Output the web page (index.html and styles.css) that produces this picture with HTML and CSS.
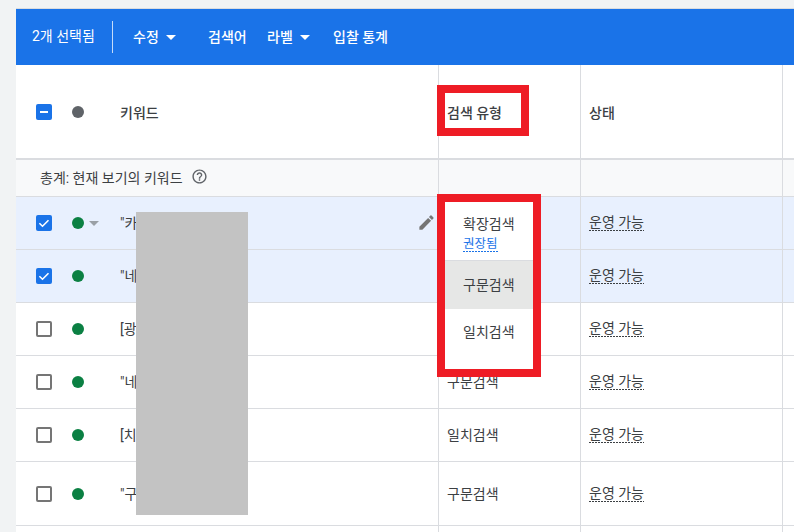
FILE: index.html
```html
<!DOCTYPE html>
<html lang="ko">
<head>
<meta charset="utf-8">
<title>키워드</title>
<link rel="stylesheet" href="styles.css">
</head>
<body>
<div class="page">
  <div class="toolbar">
    <span class="count">2개 선택됨</span>
    <span class="divider"></span>
    <span class="action action-edit">수정<i class="tool-caret"></i></span>
    <span class="action action-search">검색어</span>
    <span class="action action-label">라벨<i class="tool-caret"></i></span>
    <span class="action">입찰 통계</span>
  </div>

  <div class="row head">
    <div class="cell kw"><span class="box on"><svg viewBox="0 0 16 16"><path d="M4 8h8" stroke="#fff" stroke-width="2"/></svg></span><span class="slot"><i class="dot grey"></i></span><span class="name">키워드</span></div>
    <div class="cell">검색 유형</div>
    <div class="cell">상태</div>
    <div class="cell"></div>
  </div>

  <div class="row totals">
    <div class="cell kw">총계: 현재 보기의 키워드<svg class="help" viewBox="0 0 24 24"><path fill="#5f6368" d="M11 18h2v-2h-2v2zm1-16C6.48 2 2 6.48 2 12s4.48 10 10 10 10-4.48 10-10S17.52 2 12 2zm0 18c-4.41 0-8-3.59-8-8s3.59-8 8-8 8 3.59 8 8-3.59 8-8 8zm0-14c-2.21 0-4 1.79-4 4h2c0-1.1.9-2 2-2s2 .9 2 2c0 2-3 1.75-3 5h2c0-2.25 3-2.5 3-5 0-2.21-1.79-4-4-4z"/></svg></div>
    <div class="cell"></div>
    <div class="cell"></div>
    <div class="cell"></div>
  </div>

  <div class="row picked">
    <div class="cell kw"><span class="box on"><svg viewBox="0 0 16 16"><path d="M3.4 8.2l3.1 3 6-6" fill="none" stroke="#fff" stroke-width="1.6"/></svg></span><span class="slot"><i class="dot"></i><i class="row-caret"></i></span><span class="name">"카</span><svg class="pencil" viewBox="0 0 24 24"><path fill="#757575" d="M3 17.25V21h3.75L17.81 9.94l-3.75-3.75L3 17.25zM20.71 7.04a1 1 0 0 0 0-1.41l-2.34-2.34a1 1 0 0 0-1.41 0l-1.83 1.83 3.75 3.75 1.83-1.83z"/></svg></div>
    <div class="cell"></div>
    <div class="cell"><span class="status">운영 가능</span></div>
    <div class="cell"></div>
  </div>
  <div class="row picked">
    <div class="cell kw"><span class="box on"><svg viewBox="0 0 16 16"><path d="M3.4 8.2l3.1 3 6-6" fill="none" stroke="#fff" stroke-width="1.6"/></svg></span><span class="slot"><i class="dot"></i></span><span class="name">"네</span></div>
    <div class="cell"></div>
    <div class="cell"><span class="status">운영 가능</span></div>
    <div class="cell"></div>
  </div>
  <div class="row">
    <div class="cell kw"><span class="box"></span><span class="slot"><i class="dot"></i></span><span class="name">[광</span></div>
    <div class="cell"></div>
    <div class="cell"><span class="status">운영 가능</span></div>
    <div class="cell"></div>
  </div>
  <div class="row">
    <div class="cell kw"><span class="box"></span><span class="slot"><i class="dot"></i></span><span class="name">"네</span></div>
    <div class="cell">구문검색</div>
    <div class="cell"><span class="status">운영 가능</span></div>
    <div class="cell"></div>
  </div>
  <div class="row">
    <div class="cell kw"><span class="box"></span><span class="slot"><i class="dot"></i></span><span class="name">[치</span></div>
    <div class="cell">일치검색</div>
    <div class="cell"><span class="status">운영 가능</span></div>
    <div class="cell"></div>
  </div>
  <div class="row tall">
    <div class="cell kw"><span class="box"></span><span class="slot"><i class="dot"></i></span><span class="name">"구</span></div>
    <div class="cell">구문검색</div>
    <div class="cell"><span class="status">운영 가능</span></div>
    <div class="cell"></div>
  </div>
  <div class="row tail">
    <div class="cell kw"></div>
    <div class="cell"></div>
    <div class="cell"></div>
    <div class="cell"></div>
  </div>
</div>

<div class="redact"></div>
<div class="mark mark-head"></div>
<div class="mark mark-menu">
  <div class="menu">
    <div class="item first"><span>확장검색</span><span class="hint">권장됨</span></div>
    <div class="item current"><span>구문검색</span></div>
    <div class="item last"><span>일치검색</span></div>
  </div>
</div>
</body>
</html>
```
FILE: styles.css
```css
* { box-sizing: border-box; }
html, body { margin: 0; height: 532px; overflow: hidden; }
body {
  position: relative;
  background: #f1f3f4;
  font: 14px/16px Roboto, "Noto Sans CJK KR", sans-serif;
  color: #3c4043;
}
.page { margin-left: 16px; padding-top: 9px; }
.page::before { content: ""; position: absolute; left: 16px; right: 0; top: 8px; height: 1px; background: #dadce0; }

.toolbar {
  height: 56px;
  background: #1a73e8;
  color: #fff;
  display: flex;
  align-items: center;
  padding-left: 16px;
}
.count { width: 64px; margin-top: -2px; }
.divider { width: 1px; height: 32px; background: rgba(255,255,255,.75); margin: 0 20px 0 16px; }
.action { font-weight: 500; display: flex; align-items: center; }
.action-edit { width: 75px; }
.action-search { width: 59px; }
.action-label { width: 66px; }
.tool-caret { width: 0; height: 0; border: 5px solid transparent; border-top-color: #fff; border-bottom: 0; margin-left: 7px; }

.row {
  display: grid;
  grid-template-columns: 422px 142px 202px 12px;
  height: 53px;
  background: #fff;
  border-bottom: 1px solid #dadce0;
}
.cell { display: flex; align-items: center; padding-left: 8px; border-left: 1px solid #dadce0; }
.cell.kw { padding-left: 20px; border-left: 0; position: relative; }
.head { height: 95px; border-bottom-width: 2px; font-weight: 500; }
.head .name, .head .cell:not(.kw) { padding-top: 2px; }
.totals { height: 37px; background: #f8f9fa; }
.totals .kw { padding-left: 24px; padding-bottom: 1px; }
.picked { background: #e8f0fe; }
.tall { height: 64px; }
.tail { height: 10px; border: 0; }

.box { width: 16px; height: 16px; border: 2px solid #757575; border-radius: 2px; flex: none; }
.box.on { background: #1a73e8; border: 0; }
.box svg { display: block; width: 16px; height: 16px; }
.slot { width: 68px; padding-left: 20px; flex: none; display: flex; align-items: center; }
.dot { width: 12px; height: 12px; border-radius: 50%; background: #0b8043; flex: none; }
.dot.grey { background: #5f6368; }
.row-caret { width: 0; height: 0; border: 5px solid transparent; border-top-color: #9aa0a6; border-bottom: 0; margin-left: 5px; }
.pencil { position: absolute; left: 401px; top: 16px; width: 19px; height: 19px; }
.help { width: 17px; height: 17px; margin: -3px 0 0 8px; }

.status {
  line-height: 15px;
  padding-bottom: 1px;
  background: repeating-linear-gradient(90deg, #3c4043 0 2px, transparent 2px 3px) left bottom / 100% 1px no-repeat;
}

.redact { position: absolute; left: 136px; top: 212px; width: 112px; height: 303px; background: #c3c3c3; }
.mark { position: absolute; left: 437px; border: 8px solid #ee1c25; }
.mark-head { top: 85px; width: 92px; height: 51px; }
.mark-menu { top: 194px; width: 104px; height: 183px; }
.menu { height: 100%; background: #fff; display: flex; flex-direction: column; }
.item { padding-left: 18px; display: flex; flex-direction: column; }
.first { height: 58px; padding-top: 14px; }
.current { height: 49px; background: #e6e7e6; justify-content: center; border-top: 1px solid #dadce0; }
.last { flex: 1; padding-top: 15px; }
.hint {
  align-self: flex-start;
  font-size: 12.5px;
  line-height: 15px;
  margin-top: 4px;
  padding-bottom: 1px;
  color: #1a73e8;
  background: repeating-linear-gradient(90deg, #1a73e8 0 2px, transparent 2px 3px) left bottom / 100% 1px no-repeat;
}
```
